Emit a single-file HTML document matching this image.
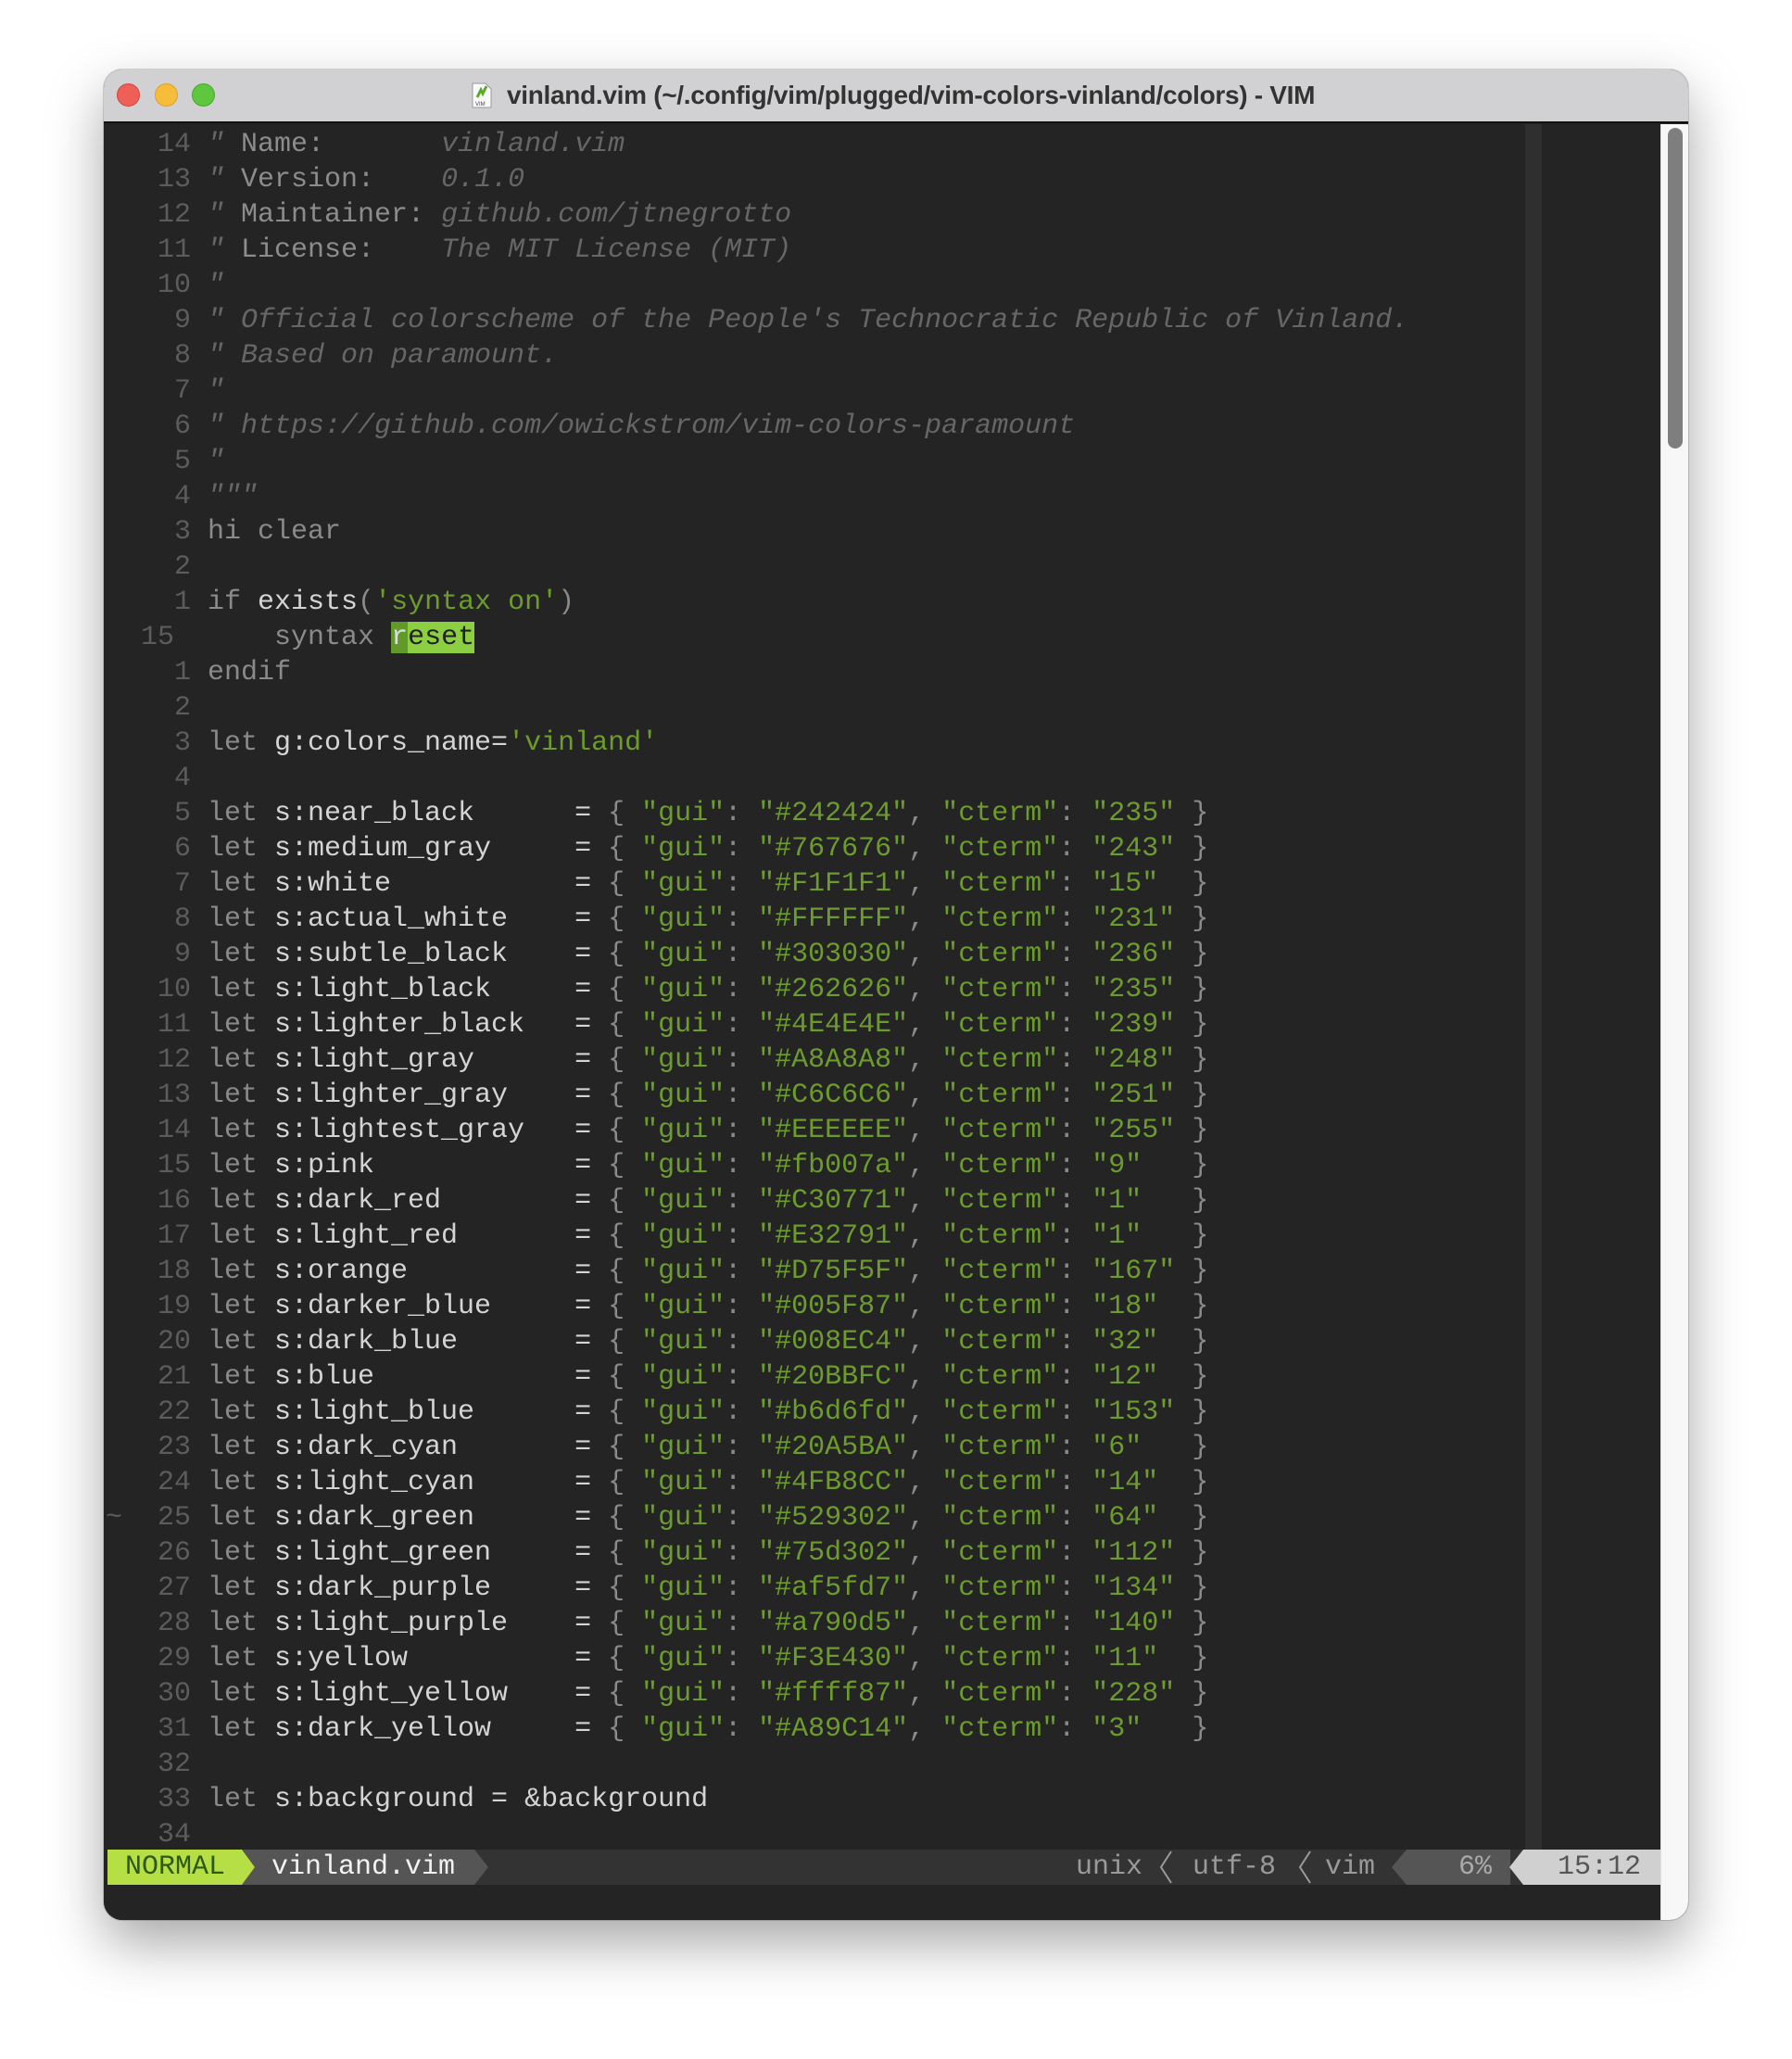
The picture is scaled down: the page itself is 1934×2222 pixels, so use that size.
<!DOCTYPE html>
<html><head><meta charset="utf-8"><style>
*{margin:0;padding:0;box-sizing:border-box}
body{width:1934px;height:2222px;background:#fff;position:relative;overflow:hidden}
.win{position:absolute;left:112px;top:75px;width:1710px;height:1997px;border-radius:20px;overflow:hidden;background:#242424;box-shadow:0 25px 60px rgba(0,0,0,.35),0 0 0 1px rgba(0,0,0,.15)}
.tb{position:absolute;left:0;top:0;width:1710px;height:58px;background:#d1d1d3;border-bottom:2px solid #111}
.dot{position:absolute;top:15px;width:25px;height:25px;border-radius:50%}
.title{position:absolute;left:435px;top:11px;font:bold 28px/34px "Liberation Sans",sans-serif;color:#333;white-space:nowrap;letter-spacing:-0.3px}
.ed{position:absolute;left:0;top:59px;width:1680px;height:1938px;background:#242424}
.cc{position:absolute;left:1534px;top:59px;width:18px;height:1862px;background:#2f2f2f}
.sb{position:absolute;left:1680px;top:59px;width:30px;height:1938px;background:#f7f7f7;border-left:1px solid #e0e0e0}
.th{position:absolute;left:1688px;top:63px;width:16px;height:346px;border-radius:8px;background:#7e7e7e}
.r{position:absolute;left:40px;height:38px;font:30px/38px "Liberation Mono",monospace;white-space:pre;color:#d4d4d4}
.n{color:#5c5c5c;display:inline-block;width:72px;text-align:right;padding-right:18px}
.nl{color:#5c5c5c;display:inline-block;width:72px;text-align:left}
.c{color:#666;font-style:italic}
.l{color:#8c8c8c}
.k{color:#8a8a8a}
.s{color:#6c9c2c}
.st{position:absolute;left:4px;top:1921px;width:1676px;height:38px;background:#333;font:30px/38px "Liberation Mono",monospace;white-space:pre}
.st span{position:absolute;top:0}
</style></head><body>
<div class="win">
<div class="tb">
<div class="dot" style="left:14px;background:#ee5f57;border:1px solid #d4463e"></div>
<div class="dot" style="left:55px;background:#f6bd3b;border:1px solid #dba12b"></div>
<div class="dot" style="left:95px;background:#5fc63f;border:1px solid #48a830"></div>
<svg style="position:absolute;left:397px;top:14px" width="22" height="28" viewBox="0 0 22 28"><path d="M1 1h14l6 6v20H1z" fill="#fafafa" stroke="#999"/><path d="M6 16l4-8 2 4 4-8" stroke="#5aaa2a" stroke-width="3" fill="none"/><text x="4" y="25" font-size="6" font-family="Liberation Sans" fill="#444">VIM</text></svg>
<div class="title">vinland.vim (~/.config/vim/plugged/vim-colors-vinland/colors) - VIM</div>
</div>
<div class="ed"></div>
<div class="cc"></div>
<div class="sb"><div></div></div>
<div class="th"></div>
<div style="position:absolute;left:0;top:3px">
<div class="r" style="top:59px"><span class="n">14</span><span class="c">"</span> <span class="l">Name:</span>       <span class="c">vinland.vim</span></div>
<div class="r" style="top:97px"><span class="n">13</span><span class="c">"</span> <span class="l">Version:</span>    <span class="c">0.1.0</span></div>
<div class="r" style="top:135px"><span class="n">12</span><span class="c">"</span> <span class="l">Maintainer:</span> <span class="c">github.com/jtnegrotto</span></div>
<div class="r" style="top:173px"><span class="n">11</span><span class="c">"</span> <span class="l">License:</span>    <span class="c">The MIT License (MIT)</span></div>
<div class="r" style="top:211px"><span class="n">10</span><span class="c">"</span></div>
<div class="r" style="top:249px"><span class="n">9</span><span class="c">" Official colorscheme of the People's Technocratic Republic of Vinland.</span></div>
<div class="r" style="top:287px"><span class="n">8</span><span class="c">" Based on paramount.</span></div>
<div class="r" style="top:325px"><span class="n">7</span><span class="c">"</span></div>
<div class="r" style="top:363px"><span class="n">6</span><span class="c">" https://github.com/owickstrom/vim-colors-paramount</span></div>
<div class="r" style="top:401px"><span class="n">5</span><span class="c">"</span></div>
<div class="r" style="top:439px"><span class="n">4</span><span class="c">"""</span></div>
<div class="r" style="top:477px"><span class="n">3</span><span class="k">hi clear</span></div>
<div class="r" style="top:515px"><span class="n">2</span></div>
<div class="r" style="top:553px"><span class="n">1</span><span class="k">if</span> exists<span class="k">(</span><span class="s">'syntax on'</span><span class="k">)</span></div>
<div class="r" style="top:591px"><span class="nl">15</span>    <span class="k">syntax</span> <span style="background:#629a2a;color:#ddd">r</span><span style="background:#8ccf42;color:#222">eset</span></div>
<div class="r" style="top:629px"><span class="n">1</span><span class="k">endif</span></div>
<div class="r" style="top:667px"><span class="n">2</span></div>
<div class="r" style="top:705px"><span class="n">3</span><span class="k">let</span> g:colors_name=<span class="s">'vinland'</span></div>
<div class="r" style="top:743px"><span class="n">4</span></div>
<div class="r" style="top:781px"><span class="n">5</span><span class="k">let</span> s:near_black      = <span class="k">{</span> <span class="s">"gui"</span><span class="k">:</span> <span class="s">"#242424"</span><span class="k">,</span> <span class="s">"cterm"</span><span class="k">:</span> <span class="s">"235"</span> <span class="k">}</span></div>
<div class="r" style="top:819px"><span class="n">6</span><span class="k">let</span> s:medium_gray     = <span class="k">{</span> <span class="s">"gui"</span><span class="k">:</span> <span class="s">"#767676"</span><span class="k">,</span> <span class="s">"cterm"</span><span class="k">:</span> <span class="s">"243"</span> <span class="k">}</span></div>
<div class="r" style="top:857px"><span class="n">7</span><span class="k">let</span> s:white           = <span class="k">{</span> <span class="s">"gui"</span><span class="k">:</span> <span class="s">"#F1F1F1"</span><span class="k">,</span> <span class="s">"cterm"</span><span class="k">:</span> <span class="s">"15"</span>  <span class="k">}</span></div>
<div class="r" style="top:895px"><span class="n">8</span><span class="k">let</span> s:actual_white    = <span class="k">{</span> <span class="s">"gui"</span><span class="k">:</span> <span class="s">"#FFFFFF"</span><span class="k">,</span> <span class="s">"cterm"</span><span class="k">:</span> <span class="s">"231"</span> <span class="k">}</span></div>
<div class="r" style="top:933px"><span class="n">9</span><span class="k">let</span> s:subtle_black    = <span class="k">{</span> <span class="s">"gui"</span><span class="k">:</span> <span class="s">"#303030"</span><span class="k">,</span> <span class="s">"cterm"</span><span class="k">:</span> <span class="s">"236"</span> <span class="k">}</span></div>
<div class="r" style="top:971px"><span class="n">10</span><span class="k">let</span> s:light_black     = <span class="k">{</span> <span class="s">"gui"</span><span class="k">:</span> <span class="s">"#262626"</span><span class="k">,</span> <span class="s">"cterm"</span><span class="k">:</span> <span class="s">"235"</span> <span class="k">}</span></div>
<div class="r" style="top:1009px"><span class="n">11</span><span class="k">let</span> s:lighter_black   = <span class="k">{</span> <span class="s">"gui"</span><span class="k">:</span> <span class="s">"#4E4E4E"</span><span class="k">,</span> <span class="s">"cterm"</span><span class="k">:</span> <span class="s">"239"</span> <span class="k">}</span></div>
<div class="r" style="top:1047px"><span class="n">12</span><span class="k">let</span> s:light_gray      = <span class="k">{</span> <span class="s">"gui"</span><span class="k">:</span> <span class="s">"#A8A8A8"</span><span class="k">,</span> <span class="s">"cterm"</span><span class="k">:</span> <span class="s">"248"</span> <span class="k">}</span></div>
<div class="r" style="top:1085px"><span class="n">13</span><span class="k">let</span> s:lighter_gray    = <span class="k">{</span> <span class="s">"gui"</span><span class="k">:</span> <span class="s">"#C6C6C6"</span><span class="k">,</span> <span class="s">"cterm"</span><span class="k">:</span> <span class="s">"251"</span> <span class="k">}</span></div>
<div class="r" style="top:1123px"><span class="n">14</span><span class="k">let</span> s:lightest_gray   = <span class="k">{</span> <span class="s">"gui"</span><span class="k">:</span> <span class="s">"#EEEEEE"</span><span class="k">,</span> <span class="s">"cterm"</span><span class="k">:</span> <span class="s">"255"</span> <span class="k">}</span></div>
<div class="r" style="top:1161px"><span class="n">15</span><span class="k">let</span> s:pink            = <span class="k">{</span> <span class="s">"gui"</span><span class="k">:</span> <span class="s">"#fb007a"</span><span class="k">,</span> <span class="s">"cterm"</span><span class="k">:</span> <span class="s">"9"</span>   <span class="k">}</span></div>
<div class="r" style="top:1199px"><span class="n">16</span><span class="k">let</span> s:dark_red        = <span class="k">{</span> <span class="s">"gui"</span><span class="k">:</span> <span class="s">"#C30771"</span><span class="k">,</span> <span class="s">"cterm"</span><span class="k">:</span> <span class="s">"1"</span>   <span class="k">}</span></div>
<div class="r" style="top:1237px"><span class="n">17</span><span class="k">let</span> s:light_red       = <span class="k">{</span> <span class="s">"gui"</span><span class="k">:</span> <span class="s">"#E32791"</span><span class="k">,</span> <span class="s">"cterm"</span><span class="k">:</span> <span class="s">"1"</span>   <span class="k">}</span></div>
<div class="r" style="top:1275px"><span class="n">18</span><span class="k">let</span> s:orange          = <span class="k">{</span> <span class="s">"gui"</span><span class="k">:</span> <span class="s">"#D75F5F"</span><span class="k">,</span> <span class="s">"cterm"</span><span class="k">:</span> <span class="s">"167"</span> <span class="k">}</span></div>
<div class="r" style="top:1313px"><span class="n">19</span><span class="k">let</span> s:darker_blue     = <span class="k">{</span> <span class="s">"gui"</span><span class="k">:</span> <span class="s">"#005F87"</span><span class="k">,</span> <span class="s">"cterm"</span><span class="k">:</span> <span class="s">"18"</span>  <span class="k">}</span></div>
<div class="r" style="top:1351px"><span class="n">20</span><span class="k">let</span> s:dark_blue       = <span class="k">{</span> <span class="s">"gui"</span><span class="k">:</span> <span class="s">"#008EC4"</span><span class="k">,</span> <span class="s">"cterm"</span><span class="k">:</span> <span class="s">"32"</span>  <span class="k">}</span></div>
<div class="r" style="top:1389px"><span class="n">21</span><span class="k">let</span> s:blue            = <span class="k">{</span> <span class="s">"gui"</span><span class="k">:</span> <span class="s">"#20BBFC"</span><span class="k">,</span> <span class="s">"cterm"</span><span class="k">:</span> <span class="s">"12"</span>  <span class="k">}</span></div>
<div class="r" style="top:1427px"><span class="n">22</span><span class="k">let</span> s:light_blue      = <span class="k">{</span> <span class="s">"gui"</span><span class="k">:</span> <span class="s">"#b6d6fd"</span><span class="k">,</span> <span class="s">"cterm"</span><span class="k">:</span> <span class="s">"153"</span> <span class="k">}</span></div>
<div class="r" style="top:1465px"><span class="n">23</span><span class="k">let</span> s:dark_cyan       = <span class="k">{</span> <span class="s">"gui"</span><span class="k">:</span> <span class="s">"#20A5BA"</span><span class="k">,</span> <span class="s">"cterm"</span><span class="k">:</span> <span class="s">"6"</span>   <span class="k">}</span></div>
<div class="r" style="top:1503px"><span class="n">24</span><span class="k">let</span> s:light_cyan      = <span class="k">{</span> <span class="s">"gui"</span><span class="k">:</span> <span class="s">"#4FB8CC"</span><span class="k">,</span> <span class="s">"cterm"</span><span class="k">:</span> <span class="s">"14"</span>  <span class="k">}</span></div>
<div class="r" style="top:1541px"><span class="n">25</span><span class="k">let</span> s:dark_green      = <span class="k">{</span> <span class="s">"gui"</span><span class="k">:</span> <span class="s">"#529302"</span><span class="k">,</span> <span class="s">"cterm"</span><span class="k">:</span> <span class="s">"64"</span>  <span class="k">}</span></div>
<div class="r" style="top:1579px"><span class="n">26</span><span class="k">let</span> s:light_green     = <span class="k">{</span> <span class="s">"gui"</span><span class="k">:</span> <span class="s">"#75d302"</span><span class="k">,</span> <span class="s">"cterm"</span><span class="k">:</span> <span class="s">"112"</span> <span class="k">}</span></div>
<div class="r" style="top:1617px"><span class="n">27</span><span class="k">let</span> s:dark_purple     = <span class="k">{</span> <span class="s">"gui"</span><span class="k">:</span> <span class="s">"#af5fd7"</span><span class="k">,</span> <span class="s">"cterm"</span><span class="k">:</span> <span class="s">"134"</span> <span class="k">}</span></div>
<div class="r" style="top:1655px"><span class="n">28</span><span class="k">let</span> s:light_purple    = <span class="k">{</span> <span class="s">"gui"</span><span class="k">:</span> <span class="s">"#a790d5"</span><span class="k">,</span> <span class="s">"cterm"</span><span class="k">:</span> <span class="s">"140"</span> <span class="k">}</span></div>
<div class="r" style="top:1693px"><span class="n">29</span><span class="k">let</span> s:yellow          = <span class="k">{</span> <span class="s">"gui"</span><span class="k">:</span> <span class="s">"#F3E430"</span><span class="k">,</span> <span class="s">"cterm"</span><span class="k">:</span> <span class="s">"11"</span>  <span class="k">}</span></div>
<div class="r" style="top:1731px"><span class="n">30</span><span class="k">let</span> s:light_yellow    = <span class="k">{</span> <span class="s">"gui"</span><span class="k">:</span> <span class="s">"#ffff87"</span><span class="k">,</span> <span class="s">"cterm"</span><span class="k">:</span> <span class="s">"228"</span> <span class="k">}</span></div>
<div class="r" style="top:1769px"><span class="n">31</span><span class="k">let</span> s:dark_yellow     = <span class="k">{</span> <span class="s">"gui"</span><span class="k">:</span> <span class="s">"#A89C14"</span><span class="k">,</span> <span class="s">"cterm"</span><span class="k">:</span> <span class="s">"3"</span>   <span class="k">}</span></div>
<div class="r" style="top:1807px"><span class="n">32</span></div>
<div class="r" style="top:1845px"><span class="n">33</span><span class="k">let</span> s:background = &amp;background</div>
<div class="r" style="top:1883px;height:35px;overflow:hidden"><span class="n">34</span></div>
<div class="r" style="top:1541px;left:2px;color:#5c5c5c">~</div>
</div>
<div class="st">
<div style="position:absolute;left:0;top:0;width:145px;height:38px;background:#b6df46"></div>
<div style="position:absolute;left:145px;top:0;width:266px;height:38px;background:#555;clip-path:polygon(0 0,251px 0,266px 19px,251px 38px,0 38px,14px 19px)"></div>
<svg style="position:absolute;left:145px;top:0" width="16" height="38"><path d="M0 0L14 19L0 38z" fill="#b6df46"/></svg>
<div style="position:absolute;left:1386px;top:0;width:128px;height:38px;background:#555;clip-path:polygon(16px 0,100% 0,100% 100%,16px 100%,0 19px)"></div>
<div style="position:absolute;left:1513px;top:0;width:163px;height:38px;background:#d0d0d0;clip-path:polygon(15px 0,100% 0,100% 100%,15px 100%,0 19px)"></div>
<span style="left:19px;color:#2d5a12">NORMAL</span>
<span style="left:177px;color:#f2f2f2">vinland.vim</span>
<span style="left:1045px;color:#9a9a9a">unix</span>
<span style="left:1171px;color:#9a9a9a">utf-8</span>
<span style="left:1314px;color:#9a9a9a">vim</span>
<span style="left:1458px;color:#aaa">6%</span>
<span style="left:1565px;color:#555">15:12</span>
<svg style="position:absolute;left:1132px;top:0" width="20" height="38"><path d="M16 2L5 19L16 36" stroke="#9a9a9a" stroke-width="2" fill="none"/></svg>
<svg style="position:absolute;left:1282px;top:0" width="20" height="38"><path d="M16 2L5 19L16 36" stroke="#9a9a9a" stroke-width="2" fill="none"/></svg>
</div>
</div>
</body></html>
